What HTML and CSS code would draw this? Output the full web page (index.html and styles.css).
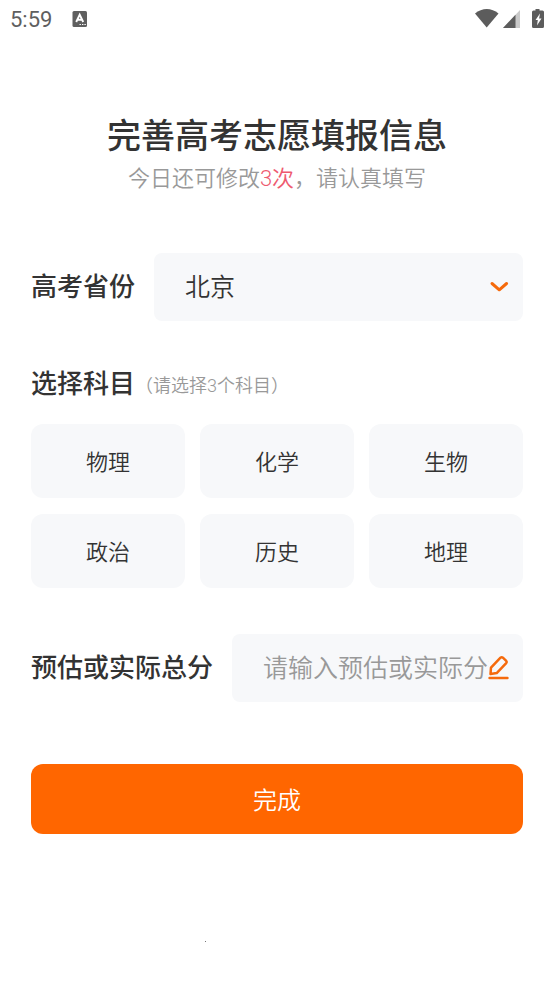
FILE: index.html
```html
<!DOCTYPE html>
<html lang="zh-CN">
<head>
<meta charset="utf-8">
<meta name="viewport" content="width=device-width, initial-scale=1">
<title>完善高考志愿填报信息</title>
<link rel="stylesheet" href="styles.css">
</head>
<body>
<header class="status">
  <time class="status-time">5:59</time>
  <svg class="status-app" width="16" height="16" viewBox="0 0 16 16" aria-hidden="true">
    <rect x="0.5" y="0" width="14.5" height="16" rx="1.5" fill="#5f5f5f"/>
    <path d="M4.2 11 7.7 3.6 11.2 11M5.4 8.7h4.6" fill="none" stroke="#fff" stroke-width="1.9"/>
    <path d="M7.5 13.5h1.4M10 13.5h1.4M12.4 13.5h1.4" stroke="#fff" stroke-width="1.2"/>
  </svg>
  <svg class="status-system" width="70" height="20" viewBox="0 0 70 20" aria-hidden="true">
    <path d="M0 4.5C7-1.5 16.500-1.500 23.500 4.500L11.700 18.500Z" fill="#5c5c5c"/>
    <path d="M45 1v18H28Z" fill="#c9c9c9"/>
    <path d="M40.500 5.800V19H28Z" fill="#5c5c5c"/>
    <path d="M60.500 0h4v1.500h3a1.500 1.500 0 0 1 1.500 1.500V17.500a1.500 1.500 0 0 1-1.500 1.500h-9a1.500 1.500 0 0 1-1.500-1.500V3a1.500 1.500 0 0 1 1.500-1.500h2Z" fill="#5c5c5c"/>
    <path d="M65 4.500 60.500 11h2.300l-.8 5.500L66.500 9.500h-2.400Z" fill="#fff"/>
  </svg>
</header>
<main class="page">
  <h1 class="title">完善高考志愿填报信息</h1>
  <p class="subtitle">今日还可修改<em class="count">3次</em>，请认真填写</p>
  <form class="form">
    <div class="row">
      <label class="label" for="province">高考省份</label>
      <div class="field">
        <select class="control" id="province"><option>北京</option></select>
        <svg class="icon" width="22" height="24" viewBox="0 0 22 24" aria-hidden="true">
          <path d="M4 8.500 11.300 14.800 18.600 8.500" fill="none" stroke="#f56a0c" stroke-width="3" stroke-linecap="round" stroke-linejoin="round"/>
        </svg>
      </div>
    </div>
    <fieldset class="subjects">
      <legend class="legend"><span class="label">选择科目</span><span class="hint">（请选择3个科目）</span></legend>
      <div class="grid">
        <button class="subject" type="button">物理</button>
        <button class="subject" type="button">化学</button>
        <button class="subject" type="button">生物</button>
        <button class="subject" type="button">政治</button>
        <button class="subject" type="button">历史</button>
        <button class="subject" type="button">地理</button>
      </div>
    </fieldset>
    <div class="row">
      <label class="label" for="score">预估或实际总分</label>
      <div class="field">
        <input class="control" id="score" type="text" inputmode="numeric" placeholder="请输入预估或实际分数">
        <svg class="icon" width="22" height="28" viewBox="0 0 22 28" aria-hidden="true">
          <path d="M2.500 20 3 13.700 12.500 3.700Q13.700 2.700 14.900 3.700L18.200 6.800Q19.300 8 18.200 9.200L8.700 19.100Z" fill="none" stroke="#f56a0c" stroke-width="2.500" stroke-linejoin="round"/>
          <path d="M1.500 24h18" stroke="#f56a0c" stroke-width="2.400" stroke-linecap="round"/>
        </svg>
      </div>
    </div>
    <button class="submit" type="submit">完成</button>
  </form>
</main>
<footer class="footer"><span class="dot"></span></footer>
</body>
</html>
```
FILE: styles.css
```css
* {
  box-sizing: border-box;
}

body {
  margin: 0;
  background: #fff;
  color: #333;
  font-family: Roboto, "Noto Sans CJK SC", sans-serif;
  font-weight: 350;
}

.status {
  display: flex;
  align-items: center;
  height: 38px;
  padding: 0 9px 0 10px;
}

.status-time {
  padding-top: 2px;
  color: #5f5f5f;
  font-size: 22px;
  font-weight: 400;
  line-height: 24px;
}

.status-app {
  margin-left: 20px;
}

.status-system {
  margin-left: auto;
}

.page {
  padding: 73px 31px 0;
}

.title {
  margin: 0;
  font-size: 34px;
  font-weight: 500;
  line-height: 50px;
  text-align: center;
}

.subtitle {
  margin: 2px 0 0;
  color: #999;
  font-size: 22px;
  line-height: 32px;
  text-align: center;
}

.count {
  color: #ee5a6f;
  font-style: normal;
}

.form {
  margin-top: 58px;
}

.row {
  display: flex;
  align-items: center;
  gap: 19px;
}

.label {
  flex: none;
  font-size: 26px;
  font-weight: 500;
  line-height: 36px;
}

.field {
  position: relative;
  display: flex;
  flex: 1;
  min-width: 0;
  height: 68px;
  padding: 0 34px 0 31px;
  border-radius: 8px;
  background: #f7f8fa;
}

.control {
  flex: 1;
  width: 100%;
  min-width: 0;
  padding: 0;
  border: 0;
  outline: 0;
  appearance: none;
  background: transparent;
  color: #333;
  font-family: inherit;
  font-size: 25px;
  font-weight: inherit;
}

.control::placeholder {
  color: #999;
  opacity: 1;
}

.icon {
  position: absolute;
  top: 50%;
  right: 13px;
  transform: translateY(-50%);
  pointer-events: none;
}

.subjects {
  min-width: 0;
  margin: 45px 0 46px;
  padding: 0;
  border: 0;
}

.legend {
  display: flex;
  align-items: center;
  padding: 0;
}

.hint {
  color: #999;
  font-size: 18px;
}

.grid {
  display: grid;
  grid-template-columns: repeat(3, 1fr);
  gap: 16px 15px;
  margin-top: 22px;
}

.subject {
  height: 74px;
  padding: 0 0 2px;
  border: 0;
  border-radius: 12px;
  background: #f7f8fa;
  color: #333;
  font-family: inherit;
  font-size: 22px;
  font-weight: inherit;
}

.submit {
  display: block;
  width: 100%;
  height: 70px;
  margin-top: 62px;
  padding: 0 0 2px;
  border: 0;
  border-radius: 12px;
  background: #ff6600;
  color: #fff;
  font-family: inherit;
  font-size: 24px;
  font-weight: inherit;
}

.footer {
  display: flex;
  padding: 107px 205px 0;
}

.dot {
  width: 1px;
  height: 1px;
  background: #777;
}
```
